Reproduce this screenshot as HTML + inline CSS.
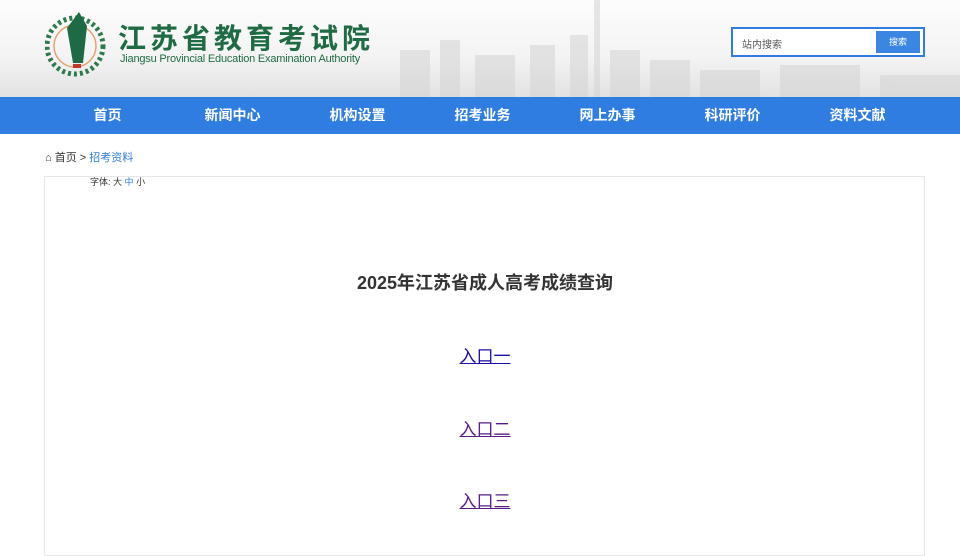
<!DOCTYPE html>
<html><head><meta charset="utf-8"><style>
*{margin:0;padding:0;box-sizing:border-box}
body{width:960px;height:549px;overflow:hidden;background:#fff;font-family:"Liberation Sans","Noto Sans CJK SC",sans-serif;color:#333}
.hdr{position:relative;height:97px;background:linear-gradient(180deg,#fdfdfd 0%,#f3f3f3 60%,#e2e2e2 100%)}
.city{position:absolute;left:380px;top:0;width:580px;height:97px}
.nav{height:37px;background:#2f7de1;display:flex;padding-left:45px}
.nav a{width:125px;text-align:center;color:#fff;font-weight:bold;font-size:14px;line-height:37px;text-decoration:none}
.crumb{position:absolute;left:45px;top:149px;font-size:11px;color:#333}
.crumb span{color:#2f7de1}
.box{position:absolute;left:44px;top:176px;width:881px;height:380px;border:1px solid #e6e6e6}
.font{position:absolute;left:45px;top:-2px;font-size:9px;color:#333}
.font b{font-weight:normal;color:#2f7de1}
h1{position:absolute;left:0;width:880px;top:92px;text-align:center;font-size:18px;color:#333}
.lk{position:absolute;width:880px;text-align:center;font-size:17px}
.lk a{color:#1a0dab;text-decoration:underline}
.lk a.v{color:#551a8b}
</style></head><body>
<div class="hdr">
<svg class="city" viewBox="0 0 580 97"><g fill="#d4d4d4" opacity=".55">
<rect x="20" y="50" width="30" height="47"/><rect x="60" y="40" width="20" height="57"/><rect x="95" y="55" width="40" height="42"/><rect x="150" y="45" width="25" height="52"/><rect x="190" y="35" width="18" height="62"/><rect x="214" y="0" width="6" height="97"/><rect x="230" y="50" width="30" height="47"/><rect x="270" y="60" width="40" height="37"/><rect x="320" y="70" width="60" height="27"/><rect x="400" y="65" width="80" height="32"/><rect x="500" y="75" width="80" height="22"/></g></svg>
<svg style="position:absolute;left:45px;top:8px" width="62" height="70" viewBox="0 0 62 70"><circle cx="30" cy="38" r="28" fill="none" stroke="#2d7a4a" stroke-width="5" stroke-dasharray="3 3"/><circle cx="30" cy="38" r="21" fill="none" stroke="#e8a070" stroke-width="1.5"/><path d="M22 20 L34 4 L42 18 L38 55 L28 55 Z" fill="#1e6a45"/><rect x="28" y="56" width="8" height="4" fill="#c0392b"/></svg>
<div style="position:absolute;left:118px;top:22px;font-size:28px;font-weight:bold;color:#1f6b43;letter-spacing:4px;line-height:34px;white-space:nowrap">江苏省教育考试院</div>
<div style="position:absolute;left:120px;top:53px;font-size:11px;color:#1f6b43;letter-spacing:-0.2px;white-space:nowrap">Jiangsu Provincial Education Examination Authority</div>
<div style="position:absolute;left:731px;top:27px;width:194px;height:30px;border:2px solid #2f7de1;background:#fff">
<span style="position:absolute;left:9px;top:7px;font-size:10px;color:#555">站内搜索</span>
<div style="position:absolute;right:3px;top:2px;width:44px;height:22px;background:#3c86e3;color:#fff;font-size:9px;text-align:center;line-height:22px">搜索</div></div>
</div>
<div class="nav"><a>首页</a><a>新闻中心</a><a>机构设置</a><a>招考业务</a><a>网上办事</a><a>科研评价</a><a>资料文献</a></div>
<div class="crumb">&#8962; 首页 &gt; <span>招考资料</span></div>
<div class="box">
<div class="font">字体: <b style="color:#333">大</b> <b>中</b> <b style="color:#333">小</b></div>
<h1>2025年江苏省成人高考成绩查询</h1>
<div class="lk" style="top:165px"><a>入口一</a></div>
<div class="lk" style="top:238px"><a class="v">入口二</a></div>
<div class="lk" style="top:310px"><a class="v">入口三</a></div>
</div>
</body></html>
